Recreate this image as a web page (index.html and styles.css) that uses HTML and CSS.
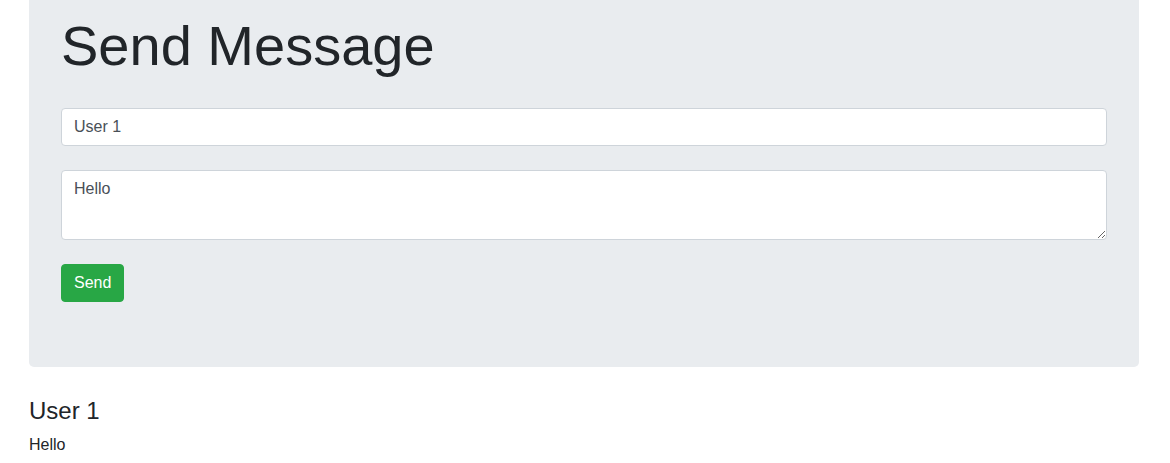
FILE: index.html
```html
<!DOCTYPE html>
<html>
<head>
<meta charset="utf-8">
<link rel="stylesheet" href="styles.css">
</head>
<body>
<div class="container">
  <div class="jumbotron">
    <h1 class="title">Send Message</h1>
    <form class="form">
      <div class="group"><input class="control" type="text" value="User 1"></div>
      <div class="group"><textarea class="control area">Hello</textarea></div>
      <button type="button" class="btn">Send</button>
    </form>
  </div>
  <div class="message">
    <h4 class="author">User 1</h4>
    <p class="text">Hello</p>
  </div>
</div>
</body>
</html>
```
FILE: styles.css
```css
html, body {
  margin: 0;
  padding: 0;
  background: #fff;
}
body {
  font-family: "Liberation Sans", Arial, sans-serif;
  font-size: 16px;
  line-height: 1.5;
  color: #212529;
}
.container {
  width: 1110px;
  margin-left: 29px;
}
.jumbotron {
  background: #e9ecef;
  border-radius: 0 0 5px 5px;
  padding: 12px 32px 65px 32px;
  margin-bottom: 30px;
}
.title {
  margin: 0 0 29px 0;
  font-size: 56px;
  font-weight: 300;
  line-height: 1.2;
}
.form {
  margin: 0;
}
.group {
  margin-bottom: 24px;
  display: flex;
}
.control {
  display: block;
  box-sizing: border-box;
  width: 100%;
  height: 38px;
  padding: 6px 12px;
  font-family: "Liberation Sans", Arial, sans-serif;
  font-size: 16px;
  line-height: 1.5;
  color: #495057;
  background: #fff;
  border: 1px solid #ced4da;
  border-radius: 4px;
  margin: 0;
}
.area {
  height: 70px;
  resize: vertical;
}
.btn {
  display: block;
  box-sizing: border-box;
  height: 38px;
  padding: 6px 12px;
  font-family: "Liberation Sans", Arial, sans-serif;
  font-size: 16px;
  line-height: 1.5;
  color: #fff;
  background: #28a745;
  border: 1px solid #28a745;
  border-radius: 4px;
  margin: 0;
}
.author {
  margin: 0 0 7px 0;
  font-size: 24px;
  font-weight: 500;
  line-height: 1.2;
}
.text {
  margin: 0;
}
```
